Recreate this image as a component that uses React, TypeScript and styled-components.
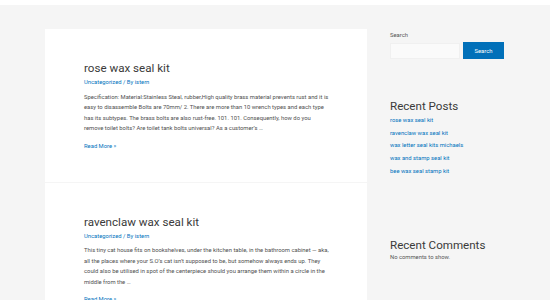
import React from "react";
import styled, { createGlobalStyle } from "styled-components";

const Global = createGlobalStyle`
  html, body { margin: 0; padding: 0; }
  body {
    background: #f5f5f5;
    font-family: Roboto, "Liberation Sans", sans-serif;
    color: #3a3a3a;
  }
`;

const TopBar = styled.div`
  height: 5px;
  background: #ffffff;
`;

const Layout = styled.div`
  display: flex;
  align-items: flex-start;
  padding: 24px 0 0 45px;
  gap: 23px;
`;

const Main = styled.main`
  width: 322px;
  display: flex;
  flex-direction: column;
  gap: 1px;
`;

const Card = styled.article`
  background: #ffffff;
  padding: 32px 37px 32px 39px;
`;

const Title = styled.h2`
  margin: 0;
  font-size: 11.6px;
  line-height: 15px;
  font-weight: 400;
  color: #3a3a3a;
`;

const Meta = styled.div`
  margin-top: 2px;
  font-size: 5.85px;
  line-height: 8px;
  color: #0274be;
`;

const Excerpt = styled.p`
  margin: 5.5px 0 0;
  font-size: 5.85px;
  line-height: 10.5px;
  color: #505050;
`;

const ReadMore = styled.a`
  display: block;
  margin-top: 8px;
  font-size: 5.85px;
  line-height: 8px;
  color: #0274be;
  text-decoration: none;
`;

const Sidebar = styled.aside`
  width: 130px;
  display: flex;
  flex-direction: column;
`;

const Label = styled.div`
  font-size: 5.85px;
  line-height: 7px;
  color: #555;
  margin-top: 3px;
`;

const SearchRow = styled.div`
  display: flex;
  align-items: center;
  gap: 3px;
  margin-top: 3px;
`;

const Input = styled.div`
  width: 70px;
  height: 16px;
  background: #fafafa;
  border: 1px solid #f0f0f0;
  box-sizing: border-box;
`;

const Button = styled.button`
  width: 41px;
  height: 17px;
  background: #0170b9;
  color: #ffffff;
  border: none;
  font-family: Roboto, "Liberation Sans", sans-serif;
  font-size: 5.85px;
  padding: 0;
`;

const WidgetTitle = styled.h3<{ $top: number }>`
  margin: ${(p) => p.$top}px 0 0;
  font-size: 11.6px;
  line-height: 14px;
  font-weight: 400;
  color: #3a3a3a;
`;

const LinkList = styled.ul`
  list-style: none;
  margin: 1px 0 0;
  padding: 0;
  display: flex;
  flex-direction: column;
`;

const LinkItem = styled.li`
  font-size: 5.85px;
  line-height: 12.7px;
  color: #0274be;
`;

const Note = styled.div`
  font-size: 5.85px;
  line-height: 8px;
  color: #555;
  margin-top: 1px;
`;

const posts = [
  {
    title: "rose wax seal kit",
    excerpt:
      "Specification: Material:Stainless Steal, rubber,High quality brass material prevents rust and it is easy to disassemble Bolts are 70mm/ 2. There are more than 10 wrench types and each type has its subtypes. The brass bolts are also rust-free. 101. 101. Consequently, how do you remove toilet bolts? Are toilet tank bolts universal? As a customer\u2019s \u2026",
  },
  {
    title: "ravenclaw wax seal kit",
    excerpt:
      "This tiny cat house fits on bookshelves, under the kitchen table, in the bathroom cabinet \u2014 aka, all the places where your S.O\u2019s cat isn\u2019t supposed to be, but somehow always ends up. They could also be utilised in spot of the centerpiece should you arrange them within a circle in the middle from the \u2026",
  },
];

const recent = [
  "rose wax seal kit",
  "ravenclaw wax seal kit",
  "wax letter seal kits michaels",
  "wax and stamp seal kit",
  "bee wax seal stamp kit",
];

export default function App() {
  return (
    <>
      <Global />
      <TopBar />
      <Layout>
        <Main>
          {posts.map((p) => (
            <Card key={p.title}>
              <Title>{p.title}</Title>
              <Meta>Uncategorized / By istern</Meta>
              <Excerpt>{p.excerpt}</Excerpt>
              <ReadMore href="#">Read More »</ReadMore>
            </Card>
          ))}
        </Main>
        <Sidebar>
          <Label>Search</Label>
          <SearchRow>
            <Input />
            <Button>Search</Button>
          </SearchRow>
          <WidgetTitle $top={40}>Recent Posts</WidgetTitle>
          <LinkList>
            {recent.map((r) => (
              <LinkItem key={r}>{r}</LinkItem>
            ))}
          </LinkList>
          <WidgetTitle $top={60}>Recent Comments</WidgetTitle>
          <Note>No comments to show.</Note>
        </Sidebar>
      </Layout>
    </>
  );
}
